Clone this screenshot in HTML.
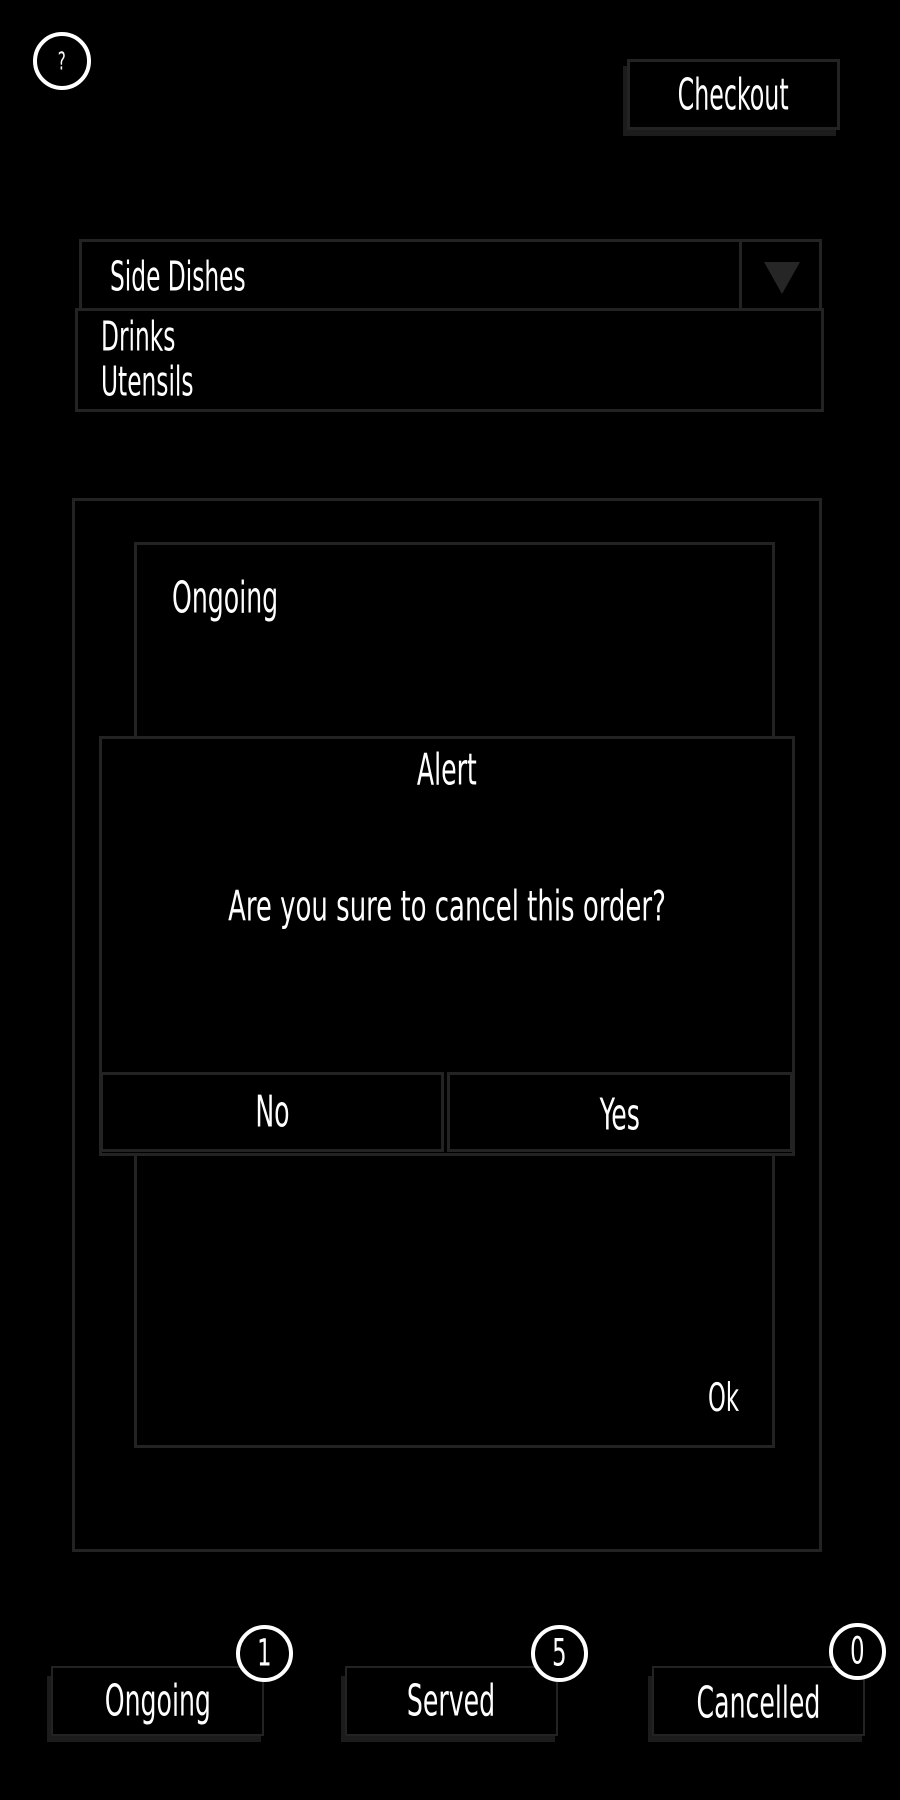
<!DOCTYPE html>
<html><head><meta charset="utf-8"><style>
*{margin:0;padding:0;box-sizing:border-box}
body{width:900px;height:1800px;background:#000;position:relative;overflow:hidden;font-family:"Liberation Sans Narrow","DejaVu Sans Condensed","Liberation Sans",sans-serif;color:#fff}
.b{position:absolute;border:3px solid #232323}
.c{position:absolute;display:flex;align-items:center;justify-content:center;white-space:nowrap}
.c span,.l span{display:inline-block;transform:scale(.7,1.1)}
.l{position:absolute;white-space:nowrap}
.l span{transform-origin:left center}
.badge{position:absolute;border:4px solid #fff;border-radius:50%;background:#000;display:flex;align-items:center;justify-content:center;font-size:36px}
.badge span{display:inline-block;transform:scale(.7,1.05)}
.sh{position:absolute;background:#1c1c1c}
</style></head><body>
<div class="badge" style="left:33px;top:32px;width:58px;height:58px;font-size:24px"><span>?</span></div>

<div class="sh" style="left:623px;top:66px;width:213px;height:70px"></div>
<div class="b c" style="left:627px;top:59px;width:213px;height:71px;background:#000;font-size:40px"><span style="transform:scale(.66,1.1)">Checkout</span></div>

<div class="b" style="left:79px;top:239px;width:743px;height:72px"></div>
<div class="b" style="left:739px;top:239px;width:83px;height:72px"></div>
<svg style="position:absolute;left:762px;top:260px" width="40" height="36"><polygon points="2,2 38,2 20,34" fill="#262626"/></svg>
<div class="l" style="left:110px;top:255px;font-size:37px"><span>Side Dishes</span></div>
<div class="b" style="left:75px;top:308px;width:749px;height:104px"></div>
<div class="l" style="left:101px;top:315px;font-size:37px"><span>Drinks</span></div>
<div class="l" style="left:101px;top:360px;font-size:37px"><span>Utensils</span></div>

<div class="b" style="left:72px;top:498px;width:750px;height:1054px"></div>
<div class="b" style="left:134px;top:542px;width:641px;height:906px"></div>
<div class="l" style="left:172px;top:575px;font-size:40px"><span>Ongoing</span></div>
<div class="l" style="left:708px;top:1378px;font-size:36px"><span>Ok</span></div>

<div class="b" style="left:99px;top:736px;width:696px;height:420px;background:#000"></div>
<div class="c" style="left:99px;top:745px;width:696px;height:50px;font-size:40px"><span>Alert</span></div>
<div class="c" style="left:99px;top:880px;width:696px;height:52px;font-size:38px"><span style="transform:scale(.76,1.1)">Are you sure to cancel this order?</span></div>
<div class="b c" style="left:100px;top:1072px;width:344px;height:80px;font-size:40px"><span>No</span></div>
<div class="b c" style="left:447px;top:1072px;width:346px;height:80px;font-size:40px;padding-top:6px"><span>Yes</span></div>

<div class="sh" style="left:47px;top:1676px;width:214px;height:66px"></div>
<div class="b c" style="left:51px;top:1666px;width:213px;height:70px;background:#000;border-width:2px;font-size:40px"><span>Ongoing</span></div>
<div class="badge" style="left:236px;top:1625px;width:57px;height:57px"><span>1</span></div>

<div class="sh" style="left:341px;top:1676px;width:214px;height:66px"></div>
<div class="b c" style="left:345px;top:1666px;width:213px;height:70px;background:#000;border-width:2px;font-size:40px"><span>Served</span></div>
<div class="badge" style="left:531px;top:1625px;width:57px;height:57px"><span>5</span></div>

<div class="sh" style="left:648px;top:1676px;width:214px;height:66px"></div>
<div class="b c" style="left:652px;top:1666px;width:213px;height:70px;background:#000;border-width:2px;font-size:40px;padding-top:4px"><span>Cancelled</span></div>
<div class="badge" style="left:829px;top:1623px;width:57px;height:57px"><span>0</span></div>
</body></html>
